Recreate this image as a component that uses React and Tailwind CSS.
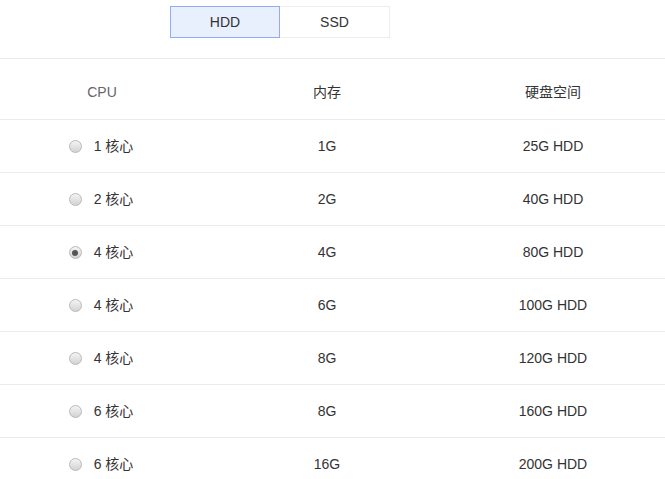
import React from 'react'

const ROWS = [
  { cpu: 1, mem: '1G', disk: '25G HDD' },
  { cpu: 2, mem: '2G', disk: '40G HDD' },
  { cpu: 4, mem: '4G', disk: '80G HDD', checked: true },
  { cpu: 4, mem: '6G', disk: '100G HDD' },
  { cpu: 4, mem: '8G', disk: '120G HDD' },
  { cpu: 6, mem: '8G', disk: '160G HDD' },
  { cpu: 6, mem: '16G', disk: '200G HDD' },
]

const Radio = ({ checked }) => (
  <span className="w-[13px] h-[13px] rounded-full border border-[#b9b9b9] bg-gradient-to-b from-[#f4f4f4] to-[#d3d3d3] flex items-center justify-center">
    {checked && <span className="w-[6px] h-[6px] rounded-full bg-[#555]" />}
  </span>
)

const App = () => {
  return (
    <div className="w-[665px] h-[479px] overflow-hidden bg-white text-[14px] text-[#333]" style={{ fontFamily: '"Liberation Sans", "Noto Sans CJK SC", sans-serif' }}>
      <div className="h-[59px] border-b border-[#ebebeb] pt-[6px] pl-[170px] flex items-start">
        <button className="w-[110px] h-[32px] border border-[#94aaf3] bg-[#e8effd] text-[14px] text-[#333]">HDD</button>
        <button className="w-[110px] h-[32px] border border-[#ededed] border-l-0 bg-white text-[14px] text-[#333]">SSD</button>
      </div>
      <div className="grid grid-cols-[204px_246px_206px] h-[61px] pt-[6px] items-center border-b border-[#ebebeb] text-center">
        <span className="text-[#666]">CPU</span>
        <span>内存</span>
        <span>硬盘空间</span>
      </div>
      {ROWS.map((r, i) => (
        <div key={i} className="grid grid-cols-[204px_246px_206px] h-[53px] pt-[1px] items-center border-b border-[#ebebeb] text-center">
          <div className="flex items-center justify-center gap-[12px] pr-[2px]">
            <Radio checked={r.checked} />
            <span>{r.cpu} 核心</span>
          </div>
          <span>{r.mem}</span>
          <span>{r.disk}</span>
        </div>
      ))}
    </div>
  )
}

export default App
